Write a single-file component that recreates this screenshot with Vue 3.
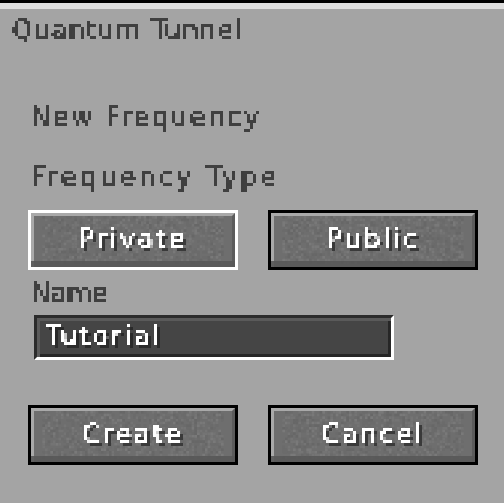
<script setup>
function texture(seed) {
  let s = seed
  const rnd = () => {
    s = (s * 16807) % 2147483647
    return s / 2147483647
  }
  const cells = []
  for (let y = 0; y < 18; y++) {
    for (let x = 0; x < 68; x++) {
      const r = rnd()
      if (r < 0.3) cells.push({ x: x * 3, y: y * 3, fill: r < 0.12 ? '#676767' : '#6b6b6b' })
      else if (r > 0.72) cells.push({ x: x * 3, y: y * 3, fill: r > 0.9 ? '#797979' : '#747474' })
    }
  }
  return cells
}
const top = [
  { label: 'Private', selected: true, cells: texture(11) },
  { label: 'Public', selected: false, cells: texture(222) },
]
const bottom = [
  { label: 'Create', selected: false, cells: texture(3333) },
  { label: 'Cancel', selected: false, cells: texture(44444) },
]
</script>

<template>
  <div class="page">
    <svg class="defs" width="0" height="0" aria-hidden="true">
      <filter id="px" x="0" y="0" width="100%" height="100%" color-interpolation-filters="sRGB">
        <feFlood x="1" y="1" width="1" height="1" flood-color="#000" />
        <feComposite x="0" y="0" width="3" height="3" />
        <feTile result="grid" />
        <feComposite in="SourceGraphic" in2="grid" operator="in" />
        <feMorphology operator="dilate" radius="1" />
        <feComponentTransfer>
          <feFuncA type="discrete" tableValues="0 0 1 1" />
        </feComponentTransfer>
      </filter>
    </svg>
    <div class="panel">
      <h1 class="title">Quantum Tunnel</h1>
      <div class="label freq">New Frequency</div>
      <div class="label type">Frequency Type</div>
      <div class="row first">
        <button v-for="b in top" :key="b.label" class="btn" :class="{ selected: b.selected }">
          <svg class="tex" width="204" height="54" viewBox="0 0 204 54">
            <rect v-for="(c, i) in b.cells" :key="i" :x="c.x" :y="c.y" width="3" height="3" :fill="c.fill" />
          </svg>
          <span class="btn-text">{{ b.label }}</span>
        </button>
      </div>
      <div class="label name">Name</div>
      <div class="field"><span class="field-text">Tutorial</span></div>
      <div class="row last">
        <button v-for="b in bottom" :key="b.label" class="btn">
          <svg class="tex" width="204" height="54" viewBox="0 0 204 54">
            <rect v-for="(c, i) in b.cells" :key="i" :x="c.x" :y="c.y" width="3" height="3" :fill="c.fill" />
          </svg>
          <span class="btn-text">{{ b.label }}</span>
        </button>
      </div>
    </div>
  </div>
</template>

<style scoped>
.page {
  width: 504px;
  height: 503px;
  overflow: hidden;
  background: #000;
  padding-top: 3px;
  box-sizing: border-box;
  font-family: "DejaVu Sans", sans-serif;
}
.defs {
  display: block;
  height: 0;
}
.panel {
  height: 500px;
  box-sizing: border-box;
  background: #a4a4a4;
  border-top: 6px solid #dedede;
  padding: 0 0 0 28px;
}
.title,
.label {
  margin: 0;
  font-weight: 400;
  font-size: 26px;
  line-height: 30px;
  color: #404040;
  -webkit-text-stroke: 0.6px #404040;
  filter: url(#px);
  white-space: nowrap;
}
.title {
  margin-left: -16px;
  padding-top: 6px;
  letter-spacing: 1.2px;
}
.label {
  margin-left: 3px;
}
.freq { margin-top: 57px; letter-spacing: 2.4px; }
.type { margin-top: 30px; letter-spacing: 3.3px; }
.name { margin-top: 8px; letter-spacing: 0px; }
.row {
  display: flex;
  gap: 30px;
}
.first { margin-top: 18px; }
.last { margin-top: 45px; }
.btn {
  width: 210px;
  height: 60px;
  box-sizing: border-box;
  padding: 0;
  border: 3px solid #000;
  background: #6e6e6e;
  position: relative;
  font: inherit;
  display: flex;
  align-items: center;
  justify-content: center;
  overflow: hidden;
}
.btn.selected {
  border-color: #fff;
}
.tex {
  position: absolute;
  left: 3px;
  top: 3px;
  width: 198px;
  height: 48px;
}
.btn::before {
  content: "";
  position: absolute;
  inset: 0;
  border-top: 3px solid #a9a9a9;
  border-left: 3px solid #a9a9a9;
  border-right: 3px solid #5c5c5c;
}
.btn::after {
  content: "";
  position: absolute;
  left: 0;
  right: 0;
  bottom: 0;
  height: 6px;
  background: #585858;
  opacity: 0.9;
}
.btn-text {
  position: relative;
  font-size: 26px;
  line-height: 30px;
  letter-spacing: 2.5px;
  color: #fff;
  -webkit-text-stroke: 0.6px #fff;
  text-shadow: 3px 3px 0 #3a3a3a;
  filter: url(#px);
  padding: 0 4px 2px;
}
.field {
  width: 360px;
  height: 45px;
  box-sizing: border-box;
  margin: 7px 0 0 6px;
  background: #454545;
  border-top: 3px solid #2b2b2b;
  border-left: 3px solid #2b2b2b;
  border-right: 3px solid #fff;
  border-bottom: 3px solid #fff;
  box-shadow: inset 3px 3px 0 #5a5a5a, inset -3px -3px 0 #262626;
  display: flex;
  align-items: center;
  padding-left: 9px;
}
.field-text {
  font-size: 26px;
  line-height: 30px;
  letter-spacing: 2.6px;
  color: #fff;
  -webkit-text-stroke: 0.6px #fff;
  text-shadow: 3px 3px 0 #2a2a2a;
  filter: url(#px);
  padding: 0 4px 4px 0;
}
</style>
